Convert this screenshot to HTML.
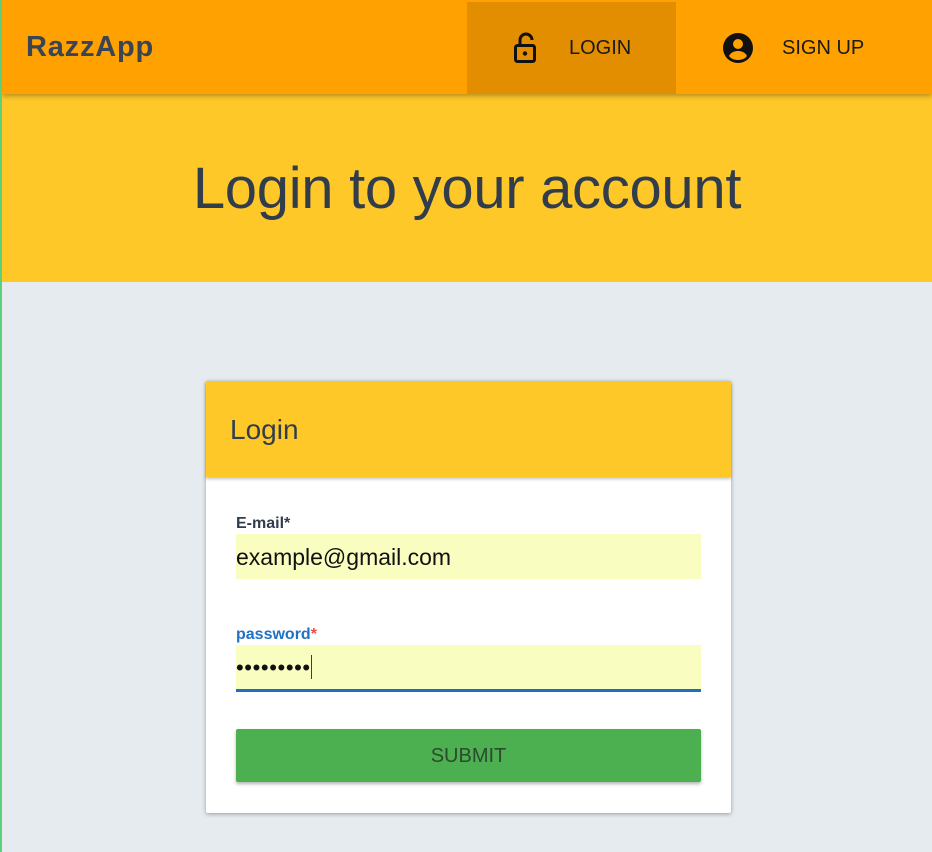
<!DOCTYPE html>
<html><head><style>
*{box-sizing:border-box;margin:0;padding:0}
body{width:932px;height:852px;overflow:hidden;background:#e5ebef;font-family:"Liberation Sans",sans-serif;position:relative}
.gl{position:absolute;left:0;top:0;width:2px;height:852px;background:#5ecf7a;z-index:3}
.nav{position:absolute;left:2px;top:0;width:930px;height:94px;background:#ffa100;box-shadow:0 2px 5px rgba(0,0,0,.3);z-index:2}
.logo{position:absolute;left:24px;top:31px;font-size:29px;font-weight:bold;color:#3b4452;letter-spacing:.8px}
.nl{position:absolute;left:465px;top:2px;width:209px;height:92px;background:#e38e00}
.item{position:absolute;top:37px;font-size:20px;color:#1a1a1a}
.hero{position:absolute;left:2px;top:94px;width:930px;height:188px;background:#ffc829;text-align:center}
.hero h1{font-weight:normal;font-size:58px;color:#323d4c;margin-top:61px;letter-spacing:-.3px}
.card{position:absolute;left:206px;top:381px;width:525px;height:432px;background:#fff;box-shadow:0 1px 4px rgba(0,0,0,.35);border-radius:2px}
.ch{height:96px;background:#ffc829;box-shadow:0 2px 3px rgba(0,0,0,.25);padding:33px 24px;font-size:28px;color:#323d4c;position:relative}
.lbl{position:absolute;left:30px;font-size:16px;font-weight:bold}
.inp{position:absolute;left:30px;width:465px;background:#fafdc0;font-size:23px;color:#111;padding-top:10px}
.btn{position:absolute;left:30px;top:348px;width:465px;height:53px;background:#4caf50;box-shadow:0 2px 3px rgba(0,0,0,.3);border-radius:2px;text-align:center;line-height:55px;font-size:20px;color:#2b4a2f}
</style></head><body>
<div class="gl"></div>
<div class="nav">
<div class="logo">RazzApp</div>
<div class="nl"></div>
<svg style="position:absolute;left:510px;top:31px" width="28" height="34" viewBox="0 0 28 34"><path d="M8 14V9a6 6 0 0 1 12 0" fill="none" stroke="#111" stroke-width="3"/><rect x="3.5" y="14.5" width="19" height="16" rx="2" fill="none" stroke="#111" stroke-width="3"/><circle cx="13" cy="22.5" r="2.2" fill="#111"/></svg>
<div class="item" style="left:567px">LOGIN</div>
<svg style="position:absolute;left:720px;top:32px" width="32" height="32" viewBox="0 0 32 32"><circle cx="16" cy="16" r="15" fill="#111"/><circle cx="16" cy="12" r="5" fill="#ffa100"/><path d="M7 24c2-4 6-5 9-5s7 1 9 5c-2 3-6 4-9 4s-7-1-9-4z" fill="#ffa100"/></svg>
<div class="item" style="left:780px">SIGN UP</div>
</div>
<div class="hero"><h1>Login to your account</h1></div>
<div class="card">
<div class="ch">Login</div>
<div class="lbl" style="top:134px;color:#323d4c">E-mail*</div>
<div class="inp" style="top:153px;height:45px">example@gmail.com</div>
<div class="lbl" style="top:245px;color:#1f72c4">password<span style="color:#f04a4a">*</span></div>
<div class="inp" style="top:264px;height:47px;border-bottom:3px solid #1f6fbf;font-size:22px;letter-spacing:.6px">•••••••••<span style="display:inline-block;width:1px;height:24px;background:#1f3f8f;vertical-align:-4px;margin-left:0"></span></div>
<div class="btn">SUBMIT</div>
</div>
</body></html>
